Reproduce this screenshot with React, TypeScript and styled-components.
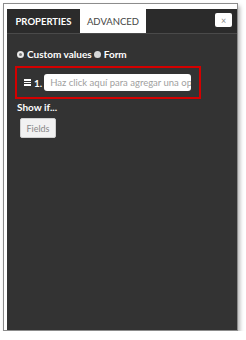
import React from "react";
import styled, { createGlobalStyle } from "styled-components";

const Global = createGlobalStyle`
  html, body { margin: 0; padding: 0; background: #ffffff; }
  body { font-family: Lato, "Open Sans", Arial, sans-serif; }
`;

const Frame = styled.div`
  box-sizing: border-box;
  margin: 3px 0 0 3px;
  width: 235px;
  height: 328px;
  border: 1px solid #8c8c8c;
  background: #ffffff;
  padding: 5px 0 0 3px;
  box-shadow: 2px 3px 4px rgba(0, 0, 0, 0.28);
  display: flex;
`;

const Panel = styled.div`
  flex: 1;
  background: #333333;
  display: flex;
  flex-direction: column;
`;

const TabBar = styled.div`
  display: flex;
  align-items: stretch;
  height: 24px;
  background: #2b2b2b;
  border-bottom: 1px solid #4a4a4a;
`;

const Tab = styled.div<{ $active?: boolean }>`
  display: flex;
  align-items: center;
  justify-content: center;
  padding: 0 6px;
  font-size: 9.5px;
  text-transform: uppercase;
  font-weight: ${(p) => (p.$active ? 400 : 700)};
  color: ${(p) => (p.$active ? "#444444" : "#ffffff")};
  background: ${(p) => (p.$active ? "#ffffff" : "#2b2b2b")};
  width: ${(p) => (p.$active ? "66px" : "73px")};
  box-sizing: border-box;
`;

const CloseButton = styled.div`
  margin: 4px 5px 0 auto;
  width: 17px;
  height: 14px;
  background: #ffffff;
  border-radius: 2px;
  display: flex;
  align-items: center;
  justify-content: center;
  color: #8a8a8a;
  font-size: 9px;
  line-height: 1;
`;

const Content = styled.div`
  display: flex;
  flex-direction: column;
  align-items: flex-start;
  padding: 13px 0 0 8px;
`;

const RadioRow = styled.div`
  display: flex;
  align-items: center;
  gap: 2px;
  font-size: 10px;
  font-weight: 700;
  color: #ffffff;
  margin-left: 2px;
  height: 14px;
`;

const Radio = styled.span<{ $checked?: boolean }>`
  display: inline-block;
  box-sizing: border-box;
  width: 7px;
  height: 7px;
  border-radius: 50%;
  background: ${(p) => (p.$checked ? "#777777" : "#d8d8d8")};
  border: ${(p) => (p.$checked ? "2px solid #e8e8e8" : "none")};
  margin-right: 1px;
`;

const OptionBox = styled.div`
  box-sizing: border-box;
  margin-top: 5px;
  width: 186px;
  height: 33px;
  border: 2px solid #d40000;
  display: flex;
  align-items: center;
  padding: 0 8px 0 7px;
  gap: 2px;
`;

const Handle = styled.span`
  display: flex;
  flex-direction: column;
  gap: 1px;
  width: 7px;
  margin-right: 1px;
  & > i {
    display: block;
    height: 1.5px;
    background: #ffffff;
  }
`;

const Index = styled.span`
  font-size: 10px;
  font-weight: 700;
  color: #ffffff;
`;

const Input = styled.div`
  flex: 1;
  min-width: 0;
  height: 17px;
  background: #ffffff;
  border-radius: 3px;
  display: flex;
  align-items: center;
  padding-left: 6px;
  font-size: 9.5px;
  color: #a0a0a0;
  white-space: nowrap;
  overflow: hidden;
`;

const ShowIf = styled.div`
  margin: 2px 0 0 2px;
  font-size: 10px;
  font-weight: 700;
  color: #ffffff;
`;

const FieldsButton = styled.div`
  margin: 5px 0 0 5px;
  box-sizing: border-box;
  width: 36px;
  height: 20px;
  background: #f2f2f2;
  border: 1px solid #cfcfcf;
  border-radius: 2px;
  display: flex;
  align-items: center;
  justify-content: center;
  font-size: 9px;
  color: #888888;
`;

export default function App() {
  return (
    <>
      <Global />
      <Frame>
        <Panel>
          <TabBar>
            <Tab>Properties</Tab>
            <Tab $active>Advanced</Tab>
            <CloseButton>×</CloseButton>
          </TabBar>
          <Content>
            <RadioRow>
              <Radio $checked />
              <span>Custom values</span>
              <Radio />
              <span>Form</span>
            </RadioRow>
            <OptionBox>
              <Handle>
                <i />
                <i />
                <i />
              </Handle>
              <Index>1.</Index>
              <Input>Haz click aquí para agregar una opción</Input>
            </OptionBox>
            <ShowIf>Show if...</ShowIf>
            <FieldsButton>Fields</FieldsButton>
          </Content>
        </Panel>
      </Frame>
    </>
  );
}
